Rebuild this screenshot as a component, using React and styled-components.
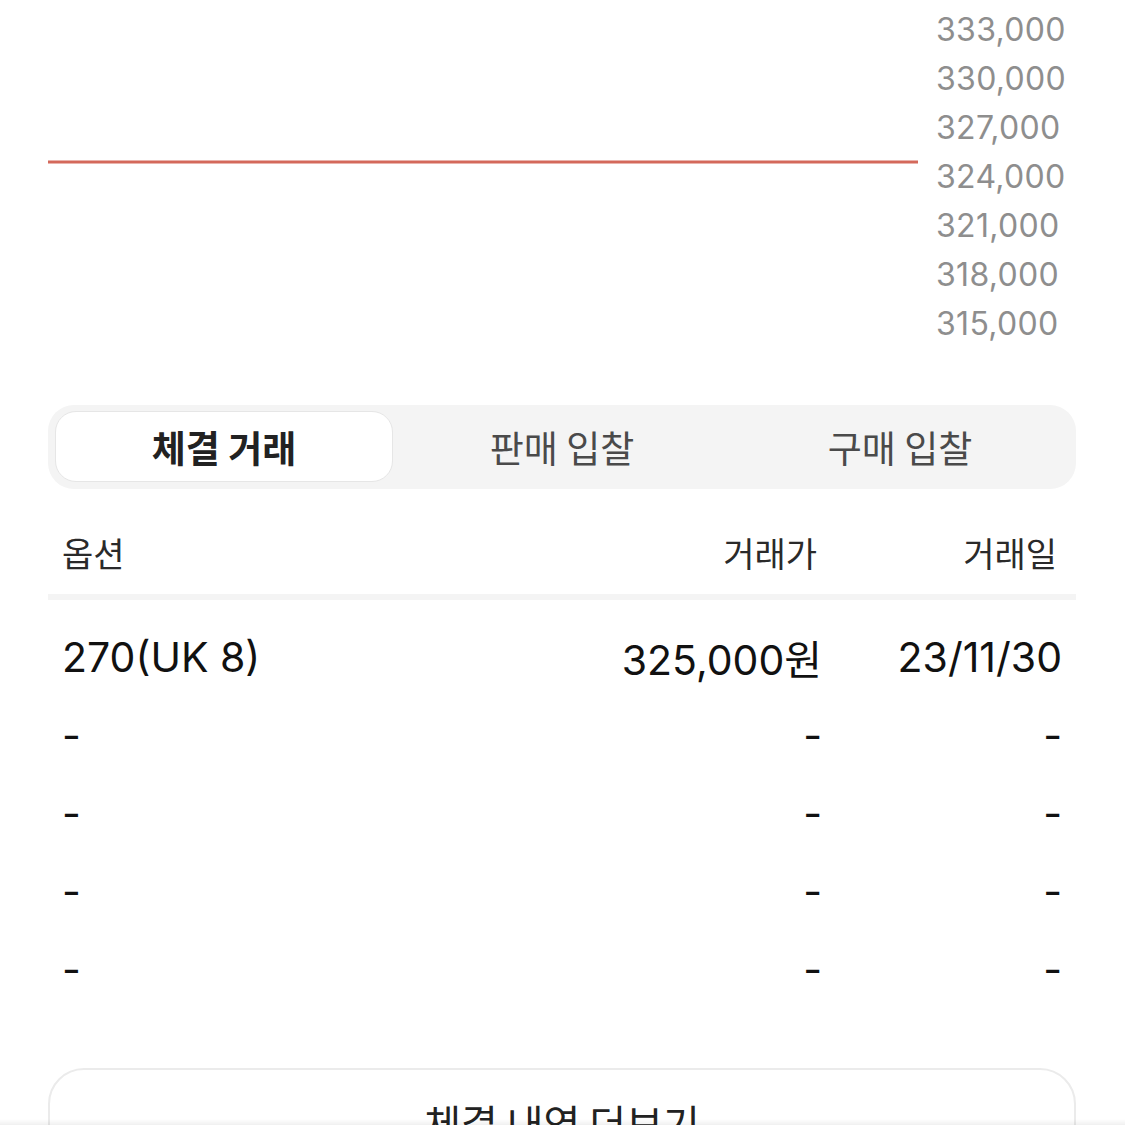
import React from 'react';
import styled, { createGlobalStyle } from 'styled-components';

const GlobalStyle = createGlobalStyle`
  html, body {
    margin: 0;
    padding: 0;
    background: #ffffff;
  }
  body {
    font-family: Inter, "Noto Sans CJK KR", "Noto Sans", sans-serif;
    color: #222222;
  }
`;

const axisLabels = ['333,000', '330,000', '327,000', '324,000', '321,000', '318,000', '315,000'];
const tabs = ['체결 거래', '판매 입찰', '구매 입찰'];
const rows = [
  { option: '270(UK 8)', price: '325,000원', date: '23/11/30' },
  { option: '-', price: '-', date: '-' },
  { option: '-', price: '-', date: '-' },
  { option: '-', price: '-', date: '-' },
  { option: '-', price: '-', date: '-' },
];

function App() {
  return (
    <Page>
      <GlobalStyle />
      <Chart>
        <Plot>
          <svg width='100%' height='100%' preserveAspectRatio='none' viewBox='0 0 870 343'>
            <line x1='0' y1='157' x2='870' y2='157' stroke='#d4695b' strokeWidth='3' />
          </svg>
        </Plot>
        <Axis>
          {axisLabels.map((label) => (
            <AxisLabel key={label}>{label}</AxisLabel>
          ))}
        </Axis>
      </Chart>

      <Tabs>
        {tabs.map((tab, i) => (
          <Tab key={tab} active={i === 0}>
            {tab}
          </Tab>
        ))}
      </Tabs>

      <Table>
        <HeadRow>
          <span>옵션</span>
          <Right>거래가</Right>
          <Right>거래일</Right>
        </HeadRow>
        <Body>
          {rows.map((row, i) => (
            <Row key={i}>
              <span>{row.option}</span>
              <Right>{row.price}</Right>
              <Right>{row.date}</Right>
            </Row>
          ))}
        </Body>
      </Table>

      <MoreButton>체결 내역 더보기</MoreButton>
      <BottomShade />
    </Page>
  );
}

const Page = styled.div`
  padding: 0 49px 0 48px;
  min-height: 1125px;
  box-sizing: border-box;
  overflow: hidden;
`;

const Chart = styled.div`
  display: grid;
  grid-template-columns: 870px 1fr;
  gap: 18px;
  padding-top: 5px;
`;

const Plot = styled.div`
  height: 343px;
  svg {
    display: block;
  }
`;

const Axis = styled.div`
  display: flex;
  flex-direction: column;
`;

const AxisLabel = styled.div`
  font-size: 32px;
  line-height: 49px;
  height: 49px;
  color: #8e8e8e;
  letter-spacing: 0.3px;
`;

const Tabs = styled.div`
  margin-top: 57px;
  display: grid;
  grid-template-columns: repeat(3, 1fr);
  padding: 6px 7px 7px;
  height: 84px;
  box-sizing: border-box;
  background: #f4f4f4;
  border-radius: 26px;
`;

const Tab = styled.div`
  display: flex;
  align-items: center;
  justify-content: center;
  font-family: "Noto Sans CJK KR", sans-serif;
  font-size: 37px;
  font-weight: ${(p) => (p.active ? 700 : 400)};
  color: ${(p) => (p.active ? '#222222' : '#4a4a4a')};
  background: ${(p) => (p.active ? '#ffffff' : 'transparent')};
  border: 1px solid ${(p) => (p.active ? '#e6e6e6' : 'transparent')};
  border-radius: 21px;
`;

const Table = styled.div`
  margin-top: 28px;
`;

const HeadRow = styled.div`
  display: grid;
  grid-template-columns: 1fr 240px 240px;
  align-items: center;
  height: 83px;
  box-sizing: border-box;
  padding: 0 19px 6px 14px;
  border-bottom: 6px solid #f4f4f4;
  font-family: "Noto Sans CJK KR", sans-serif;
  font-size: 34px;
  color: #2a2a2a;
`;

const Body = styled.div`
  padding-top: 18px;
`;

const Row = styled.div`
  display: grid;
  grid-template-columns: 1fr 240px 240px;
  align-items: center;
  height: 78px;
  padding: 0 14px;
  font-size: 41px;
  color: #111111;
`;

const Right = styled.span`
  text-align: right;
`;

const MoreButton = styled.div`
  margin-top: 60px;
  height: 104px;
  display: flex;
  align-items: center;
  justify-content: center;
  border: 2px solid #ebebeb;
  border-radius: 36px;
  font-family: "Noto Sans CJK KR", sans-serif;
  font-size: 40px;
  color: #222222;
`;

const BottomShade = styled.div`
  position: fixed;
  left: 0;
  right: 0;
  bottom: 0;
  height: 6px;
  background: linear-gradient(rgba(0, 0, 0, 0), rgba(0, 0, 0, 0.06));
`;

export default App;
